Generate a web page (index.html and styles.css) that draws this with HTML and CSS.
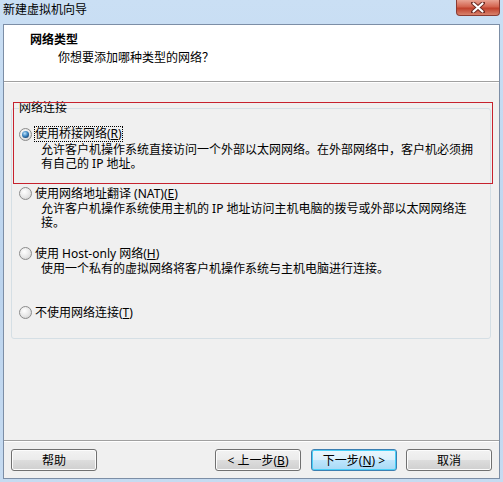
FILE: index.html
```html
<!DOCTYPE html>
<html lang="zh-CN">
<head>
    <meta charset="UTF-8">
    <title>新建虚拟机向导</title>
    <link rel="stylesheet" href="styles.css">
</head>
<body>
    <div class="window">
        <div class="titlebar">
            <span class="title">新建虚拟机向导</span>
            <span class="close">
                <svg width="14" height="11" viewBox="0 0 14 11">
                    <path d="M2 1 L12 10 M12 1 L2 10" stroke="#6b2a22" stroke-width="4" stroke-linecap="round"/>
                    <path d="M2.5 1.5 L11.5 9.5 M11.5 1.5 L2.5 9.5" stroke="#fff" stroke-width="2.2" stroke-linecap="round"/>
                </svg>
            </span>
        </div>
        <div class="client">
            <div class="header">
                <div class="heading">网络类型</div>
                <div class="subheading">你想要添加哪种类型的网络？</div>
            </div>
            <div class="content">
                <fieldset class="group">
                    <legend>网络连接</legend>
                    <div class="option opt-bridged">
                        <div class="choice"><span class="radio checked"></span><span class="focus">使用桥接网络(<u>R</u>)</span></div>
                        <div class="desc">允许客户机操作系统直接访问一个外部以太网网络。在外部网络中，客户机必须拥<br>有自己的 IP 地址。</div>
                    </div>
                    <div class="option opt-nat">
                        <div class="choice"><span class="radio"></span><span>使用网络地址翻译 (NAT)(<u>E</u>)</span></div>
                        <div class="desc">允许客户机操作系统使用主机的 IP 地址访问主机电脑的拨号或外部以太网网络连<br>接。</div>
                    </div>
                    <div class="option opt-host">
                        <div class="choice"><span class="radio"></span><span>使用 Host-only 网络(<u>H</u>)</span></div>
                        <div class="desc">使用一个私有的虚拟网络将客户机操作系统与主机电脑进行连接。</div>
                    </div>
                    <div class="option opt-none">
                        <div class="choice"><span class="radio"></span><span>不使用网络连接(<u>T</u>)</span></div>
                    </div>
                </fieldset>
                <div class="highlight"></div>
            </div>
            <div class="footer">
                <button class="btn">帮助</button>
                <button class="btn back">&lt; 上一步(<u>B</u>)</button>
                <button class="btn default">下一步(<u>N</u>) &gt;</button>
                <button class="btn">取消</button>
            </div>
        </div>
    </div>
</body>
</html>
```

FILE: styles.css
```css
body {
    margin: 0;
    font-family: "Noto Sans", "Noto Sans CJK SC", sans-serif;
    font-size: 12px;
    color: #000;
    background: #c4d9f0;
}
.window {
    width: 503px;
    height: 482px;
    box-sizing: border-box;
    padding: 0 3px 3px 3px;
    background: linear-gradient(to bottom, #cadff4, #bcd4ee 60%, #c6dbf1);
    display: flex;
    flex-direction: column;
}
.titlebar {
    height: 24px;
    display: flex;
    align-items: flex-start;
    flex-shrink: 0;
}
.title {
    line-height: 20px;
    margin-left: 0;
    color: #000;
}
.close {
    margin-left: auto;
    margin-right: 0;
    width: 44px;
    height: 16px;
    box-sizing: border-box;
    border: 1px solid #8a3b32;
    border-top: none;
    border-radius: 0 0 4px 4px;
    background: linear-gradient(to bottom, #e9a393, #d3644f 45%, #c0412c 55%, #d8826c);
    display: flex;
    justify-content: center;
    align-items: center;
}
.client {
    flex: 1;
    border: 1px solid #7c8ea6;
    background: #f0f0f0;
    display: flex;
    flex-direction: column;
}
.header {
    height: 56px;
    flex-shrink: 0;
    background: #fff;
    border-bottom: 1px solid #a0a0a0;
    box-sizing: content-box;
}
.heading {
    font-weight: bold;
    line-height: 14px;
    margin: 8px 0 0 26px;
}
.subheading {
    line-height: 14px;
    margin: 4px 0 0 54px;
}
.content {
    height: 358px;
    flex-shrink: 0;
    position: relative;
    box-shadow: inset 0 1px #fff;
}
.group {
    margin: 19px 8px 0 7px;
    padding: 0 7px 18px 7px;
    border: 1px solid #d5dfe5;
    border-radius: 3px;
}
.group legend {
    padding: 0;
    line-height: 14px;
}
.option {
    margin-top: 14px;
}
.opt-bridged {
    margin-top: 11px;
}
.opt-host {
    margin-top: 15px;
}
.opt-none {
    margin-top: 28px;
}
.choice {
    display: flex;
    align-items: center;
    height: 16px;
    gap: 3px;
}
.focus {
    outline: 1px dotted #000;
    outline-offset: 0;
    line-height: 14px;
}
.radio {
    width: 13px;
    height: 13px;
    box-sizing: border-box;
    border-radius: 50%;
    border: 1px solid #8b8b8b;
    background: radial-gradient(circle at 40% 35%, #ffffff, #e6e6e6 55%, #c8c8c8);
    display: flex;
    justify-content: center;
    align-items: center;
}
.radio.checked::after {
    content: "";
    width: 7px;
    height: 7px;
    border-radius: 50%;
    background: radial-gradient(circle at 40% 35%, #bfe3fa, #3d86c2 45%, #143f6e 80%);
}
.desc {
    padding: 1px 0 0 22px;
    line-height: 14px;
}
.highlight {
    position: absolute;
    left: 9px;
    top: 20px;
    width: 480px;
    height: 82px;
    box-sizing: border-box;
    border: 1px solid #c6222e;
}
.footer {
    flex: 1;
    border-top: 1px solid #a0a0a0;
    box-shadow: inset 0 1px #fff;
    display: flex;
    align-items: flex-start;
    padding: 8px 7px 0 7px;
    gap: 9px;
}
.btn {
    width: 86px;
    height: 22px;
    padding: 0;
    font-family: inherit;
    font-size: 12px;
    color: #000;
    border: 1px solid #707070;
    border-radius: 3px;
    background: linear-gradient(to bottom, #f2f2f2, #ebebeb 50%, #dddddd 51%, #cfcfcf);
    box-shadow: inset 0 0 0 1px #fcfcfc;
}
.btn.back {
    margin-left: auto;
    margin-right: 1px;
}
.btn.default {
    border-color: #3c7fb1;
    background: linear-gradient(to bottom, #eaf6fd, #d9f0fc 50%, #bee6fd 51%, #a7d9f5);
    box-shadow: inset 0 0 0 1px #48d0f8;
}
```
